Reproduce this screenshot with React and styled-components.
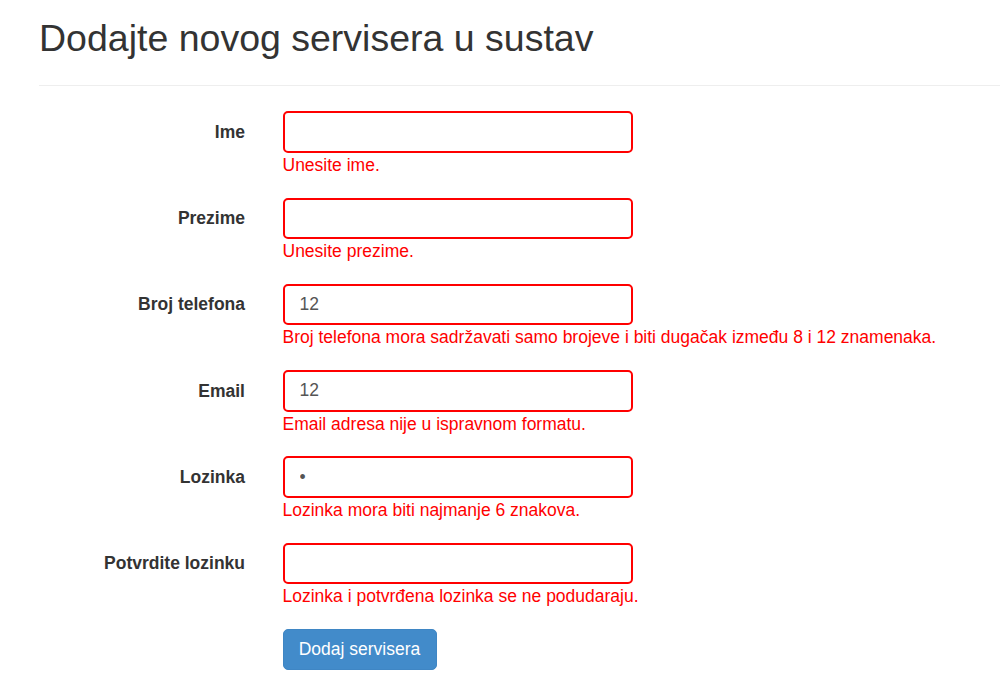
import React from "react";
import styled, { createGlobalStyle } from "styled-components";

const Global = createGlobalStyle`
  html, body { margin: 0; padding: 0; background: #fff; }
  body {
    font-family: "Liberation Sans", Arial, Helvetica, sans-serif;
    font-size: 17.5px;
    line-height: 25px;
    color: #333;
  }
  * { box-sizing: border-box; }
`;

const Page = styled.div`
  padding: 18px 0 0 39px;
`;

const Title = styled.h2`
  margin: 0;
  font-size: 37.5px;
  line-height: 41.25px;
  font-weight: 500;
  color: #333;
`;

const Rule = styled.hr`
  margin: 26px 0 25px 0;
  border: 0;
  border-top: 1px solid #eee;
`;

const Form = styled.form`
  display: flex;
  flex-direction: column;
`;

const Group = styled.div`
  display: grid;
  grid-template-columns: 206px 350px;
  column-gap: 37.5px;
  margin-bottom: 19.75px;
`;

const Label = styled.label`
  grid-column: 1;
  text-align: right;
  font-weight: bold;
  padding-top: 8.5px;
  color: #333;
`;

const Field = styled.div`
  grid-column: 2;
  display: flex;
  flex-direction: column;
`;

const Input = styled.input`
  display: block;
  width: 350px;
  height: 41.5px;
  padding: 0 15px;
  font-family: inherit;
  font-size: 17.5px;
  color: #555;
  background: #fff;
  border: 2px solid #ff0000;
  border-radius: 5px;
  outline: none;
`;

const Error = styled.span`
  display: block;
  color: #ff0000;
  white-space: nowrap;
  line-height: 25px;
`;

const Button = styled.button`
  width: 154px;
  height: 41.5px;
  padding: 0 15px;
  font-family: inherit;
  font-size: 17.5px;
  color: #fff;
  background: #428bca;
  border: 1px solid #3f86c4;
  border-radius: 5px;
`;

const fields = [
  { label: "Ime", type: "text", value: "", error: "Unesite ime." },
  { label: "Prezime", type: "text", value: "", error: "Unesite prezime." },
  {
    label: "Broj telefona",
    type: "text",
    value: "12",
    error:
      "Broj telefona mora sadržavati samo brojeve i biti dugačak između 8 i 12 znamenaka.",
  },
  { label: "Email", type: "text", value: "12", error: "Email adresa nije u ispravnom formatu." },
  { label: "Lozinka", type: "password", value: "a", error: "Lozinka mora biti najmanje 6 znakova." },
  {
    label: "Potvrdite lozinku",
    type: "password",
    value: "",
    error: "Lozinka i potvrđena lozinka se ne podudaraju.",
  },
];

export default function App() {
  return (
    <>
      <Global />
      <Page>
        <Title>Dodajte novog servisera u sustav</Title>
        <Rule />
        <Form onSubmit={(e) => e.preventDefault()}>
          {fields.map((f) => (
            <Group key={f.label}>
              <Label>{f.label}</Label>
              <Field>
                <Input type={f.type} defaultValue={f.value} />
                <Error>{f.error}</Error>
              </Field>
            </Group>
          ))}
          <Group>
            <Field>
              <Button type="submit">Dodaj servisera</Button>
            </Field>
          </Group>
        </Form>
      </Page>
    </>
  );
}
